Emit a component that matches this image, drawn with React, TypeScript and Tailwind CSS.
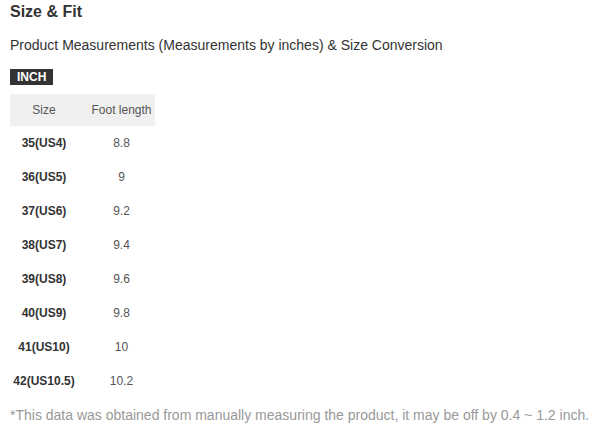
import React from 'react';

const rows = [
  ['35(US4)', '8.8'],
  ['36(US5)', '9'],
  ['37(US6)', '9.2'],
  ['38(US7)', '9.4'],
  ['39(US8)', '9.6'],
  ['40(US9)', '9.8'],
  ['41(US10)', '10'],
  ['42(US10.5)', '10.2'],
];

export default function App() {
  return (
    <div className="w-[605px] h-[430px] bg-white px-[10px] pt-[2px] font-['Liberation_Sans',Arial,sans-serif] text-[#333]">
      <h2 className="text-[16px] leading-[20px] font-bold">Size &amp; Fit</h2>
      <p className="mt-[13px] text-[14px] leading-[20px]">
        Product Measurements (Measurements by inches) &amp; Size Conversion
      </p>
      <div className="mt-[14px] w-fit bg-[#333] px-[7px] text-[12px] leading-[16px] font-bold text-white">
        INCH
      </div>
      <table className="mt-[9px] border-collapse text-[12px]">
        <thead>
          <tr className="bg-[#f0f0f0] h-[32px] text-[#555]">
            <th className="w-[68px] font-normal text-center">Size</th>
            <th className="w-[77px] pl-[10px] font-normal text-center">Foot length</th>
          </tr>
        </thead>
        <tbody>
          {rows.map(([size, len]) => (
            <tr key={size} className="h-[34px]">
              <td className="text-center font-bold text-[#333]">{size}</td>
              <td className="pl-[10px] text-center text-[#555]">{len}</td>
            </tr>
          ))}
        </tbody>
      </table>
      <p className="mt-[7px] text-[14px] leading-[20px] text-[#999]">
        *This data was obtained from manually measuring the product, it may be off by 0.4 ~ 1.2 inch.
      </p>
    </div>
  );
}
